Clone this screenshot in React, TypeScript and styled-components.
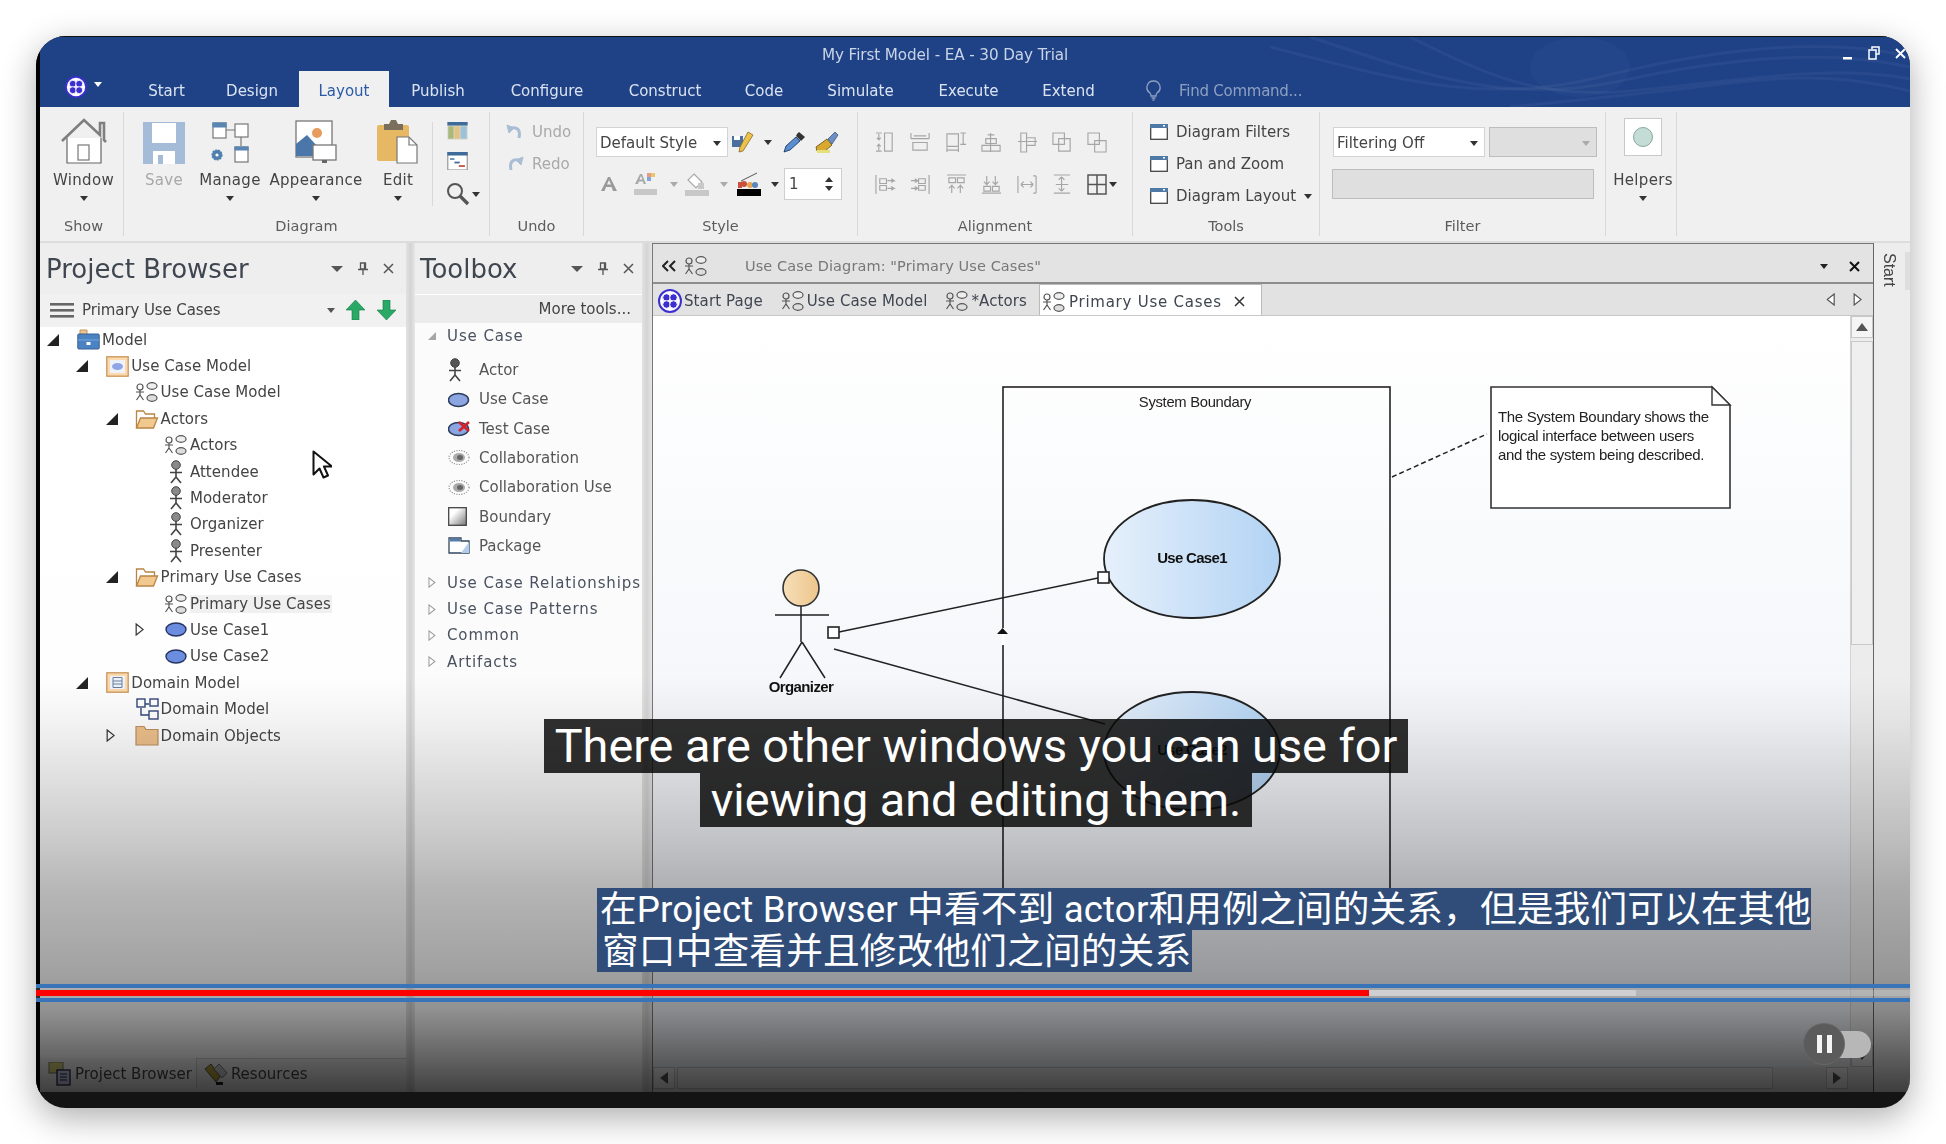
import React from 'react'
import styled, { createGlobalStyle } from 'styled-components'

const GlobalStyle = createGlobalStyle`
  html, body { margin: 0; padding: 0; background: #fff; }
  #root { width: 1946px; height: 1144px; overflow: hidden; }
  * { box-sizing: border-box; }
`

const UI = `'DejaVu Sans', 'Liberation Sans', sans-serif`

const Page = styled.div`
  width: 1946px;
  height: 1144px;
  padding: 36px 36px 36px 36px;
  background: #fff;
`

const Win = styled.div`
  position: relative;
  width: 1874px;
  height: 1072px;
  border-radius: 30px;
  overflow: hidden;
  background: #141414;
  box-shadow: 0 10px 34px rgba(0, 0, 0, 0.32);
`

const Frame = styled.div`
  height: 1056px;
  display: flex;
  flex-direction: column;
  border-left: 4px solid #000;
  border-top: 1px solid #111;
  background: #f0f0f0;
  font-family: ${UI};
  font-size: 15px;
  color: #444;
  filter: blur(0.45px);
`

const FlipSvg = styled.svg<{ $t?: string }>`
  flex: none;
  transform: ${p => p.$t ?? 'none'};
`

/* title bar */
const TitleBar = styled.div`
  position: relative;
  height: 70px;
  flex: none;
  display: flex;
  flex-direction: column;
  background: #1f4287;
`

const TitleWaves = styled.svg`
  position: absolute;
  right: 0;
  top: 0;
`

const TitleRow = styled.div`
  position: relative;
  height: 34px;
  display: flex;
  align-items: center;
  padding: 2px 0 0 782px;
  color: #c9d4e6;
  font-size: 15.2px;
  letter-spacing: -0.1px;
`

const WinControls = styled.div`
  margin-left: auto;
  display: flex;
  align-items: center;
  gap: 15px;
  padding: 0 4px 4px 0;
  color: #fff;
`

const TabRow = styled.div`
  position: relative;
  height: 36px;
  display: flex;
  align-items: stretch;
`

const LogoCell = styled.div`
  width: 88px;
  padding: 5px 0 0 25px;
  display: flex;
  gap: 7px;
  align-items: flex-start;
`

const RibbonTab = styled.div<{ $active?: boolean; $w: number }>`
  width: ${p => p.$w}px;
  padding-top: ${p => (p.$active ? '4px' : '3px')};
  display: flex;
  align-items: center;
  justify-content: center;
  font-size: 15px;
  color: ${p => (p.$active ? '#2a5aa8' : '#dbe3f0')};
  background: ${p => (p.$active ? '#f0f0f0' : 'transparent')};
`

const FindCommand = styled.div`
  display: flex;
  align-items: center;
  gap: 18px;
  margin-left: 30px;
  padding-top: 3px;
  color: #8ea0c0;
  font-size: 15px;
  letter-spacing: -0.25px;
`

/* ribbon */
const Ribbon = styled.div`
  height: 136px;
  flex: none;
  display: flex;
  background: #f0f0f0;
  border-bottom: 2px solid #dcdcdc;
  padding: 5px 0 5px;
`

const Group = styled.div<{ $w: number }>`
  width: ${p => p.$w}px;
  flex: none;
  display: flex;
  flex-direction: column;
  border-right: 1px solid #d9d9d9;
`

const GroupBody = styled.div<{ $pl?: number; $pt?: number; $row?: boolean }>`
  flex: 1;
  display: flex;
  flex-direction: ${p => (p.$row ? 'row' : 'column')};
  padding-left: ${p => p.$pl ?? 0}px;
  padding-top: ${p => p.$pt ?? 0}px;
`

const GroupLabel = styled.div<{ $pl?: number }>`
  height: 20px;
  line-height: 20px;
  padding-left: ${p => p.$pl ?? 0}px;
  text-align: center;
  font-size: 14.5px;
  color: #5c5c5c;
`

const BigButton = styled.div<{ $w: number; $pl?: number; $off?: boolean }>`
  width: ${p => p.$w}px;
  padding-left: ${p => p.$pl ?? 0}px;
  padding-top: 6px;
  display: flex;
  flex-direction: column;
  align-items: center;
  white-space: nowrap;
  color: ${p => (p.$off ? '#a8a8a8' : '#444')};
`

const BigIcon = styled.div`
  height: 46px;
  display: flex;
  align-items: flex-end;
`

const BigLabel = styled.div`
  margin-top: 6px;
  height: 20px;
  line-height: 20px;
  font-size: 15px;
  letter-spacing: 0.3px;
`

const Caret = styled.span<{ $c?: string; $mt?: number; $big?: boolean }>`
  display: inline-block;
  flex: none;
  width: 0;
  height: 0;
  margin-top: ${p => p.$mt ?? 0}px;
  border-left: ${p => (p.$big ? 6 : 4)}px solid transparent;
  border-right: ${p => (p.$big ? 6 : 4)}px solid transparent;
  border-top: ${p => (p.$big ? 6 : 5)}px solid ${p => p.$c ?? '#333'};
`

const SmallStack = styled.div`
  margin-top: 10px;
  height: 84px;
  padding-left: 13px;
  border-left: 1px solid #d9d9d9;
  display: flex;
  flex-direction: column;
  gap: 12px;
`

const MagnifyRow = styled.div`
  display: flex;
  align-items: center;
  gap: 2px;
`

const LinkRow = styled.div<{ $off?: boolean }>`
  height: 32px;
  display: flex;
  align-items: center;
  gap: 8px;
  white-space: nowrap;
  color: ${p => (p.$off ? '#a9a9a9' : '#444')};
`

const TwoRow = styled.div`
  height: 42px;
  display: flex;
  align-items: center;
`

const Cell = styled.span<{ $w: number }>`
  width: ${p => p.$w}px;
  flex: none;
  display: flex;
  justify-content: center;
  align-items: center;
`

const SelectBox = styled.div<{ $w: number; $off?: boolean }>`
  width: ${p => p.$w}px;
  height: 30px;
  flex: none;
  display: flex;
  align-items: center;
  justify-content: space-between;
  padding: 2px 6px 0 3px;
  background: ${p => (p.$off ? '#dfdfdf' : '#fff')};
  border: 1px solid ${p => (p.$off ? '#bdbdbd' : '#d3d3d3')};
  font-size: 15px;
  color: #444;
`

const SpinBox = styled.div`
  width: 58px;
  height: 32px;
  display: flex;
  align-items: center;
  justify-content: space-between;
  padding: 0 8px 0 4px;
  background: #fff;
  border: 1px solid #cfcfcf;
  font-size: 15px;
`

const SpinCarets = styled.div`
  display: flex;
  flex-direction: column;
  gap: 4px;
`

const UpCaret = styled(Caret)`
  transform: rotate(180deg);
`

const AlignGrid = styled.div`
  display: grid;
  grid-template-columns: repeat(7, 35.4px);
  grid-auto-rows: 42px;
  align-items: center;
  justify-items: start;
`

const FilterInput = styled.div`
  width: 262px;
  height: 30px;
  margin-left: -1px;
  background: #dfdfdf;
  border: 1px solid #bdbdbd;
`

const HelperBox = styled.div`
  width: 38px;
  height: 38px;
  margin-bottom: 8px;
  display: flex;
  align-items: center;
  justify-content: center;
  background: #fff;
  border: 1px solid #c9c9c9;
`

/* panes */
const Panes = styled.div`
  flex: 1;
  min-height: 0;
  display: flex;
`

const LeftPane = styled.div`
  width: 366px;
  flex: none;
  display: flex;
  flex-direction: column;
`

const PaneHead = styled.div<{ $pl: number; $pr: number }>`
  height: 51px;
  flex: none;
  display: flex;
  align-items: center;
  padding: 0 ${p => p.$pr}px 0 ${p => p.$pl}px;
  background: #eeeeee;
`

const PaneTitle = styled.div`
  flex: 1;
  font-size: 26px;
  color: #3f4650;
  white-space: nowrap;
`

const PaneTools = styled.div`
  display: flex;
  align-items: center;
  gap: 15px;
`

const BrowserBar = styled.div`
  height: 32.5px;
  flex: none;
  display: flex;
  align-items: center;
  padding: 0 9px 0 10px;
  background: #f1f1f1;
`

const BarText = styled.div`
  flex: 1;
  margin-left: 8px;
  letter-spacing: -0.1px;
`

const TreeBox = styled.div`
  flex: 1;
  min-height: 0;
  background: linear-gradient(#fff, #fdfdfd);
`

const TreeRow = styled.div<{ $depth: number }>`
  height: 26.4px;
  display: flex;
  align-items: center;
  white-space: nowrap;
  letter-spacing: 0.05px;
  padding-left: ${p => 7 + p.$depth * 29.3}px;
`

const TreeCaret = styled.span`
  width: 28px;
  flex: none;
  display: flex;
  align-items: center;
`

const TreeIcon = styled.span<{ $w?: number }>`
  width: ${p => p.$w ?? 27}px;
  flex: none;
  display: flex;
  justify-content: center;
`

const TreeText = styled.span<{ $sel?: boolean }>`
  background: ${p => (p.$sel ? '#f0f0f0' : 'transparent')};
  padding-right: 1px;
`

const DockTabs = styled.div`
  height: 34px;
  flex: none;
  display: flex;
  padding: 0 0 3px 1px;
  background: #eeeeee;
  border-top: 1px solid #d0d0d0;
`

const DockTab = styled.div<{ $active?: boolean }>`
  display: flex;
  align-items: center;
  gap: 3px;
  padding: 0 4px 0 7px;
  background: ${p => (p.$active ? '#f4f4f4' : 'transparent')};
  border-right: ${p => (p.$active ? '1px solid #ccc' : 'none')};
  margin-top: ${p => (p.$active ? '-1px' : '0')};
  font-size: 15px;
  color: #444;
`

const Splitter = styled.div<{ $w: number }>`
  width: ${p => p.$w}px;
  flex: none;
  background: linear-gradient(90deg, #e2e2e2, #d4d4d4 50%, #e6e6e6);
`

const ToolboxPane = styled.div`
  width: 227px;
  flex: none;
  display: flex;
  flex-direction: column;
  overflow: hidden;
  background: #fbfbfb;
`

const ToolboxBar = styled.div`
  height: 29px;
  flex: none;
  display: flex;
  align-items: center;
  justify-content: flex-end;
  padding-right: 11px;
  background: #ececec;
  border-top: 1px solid #fff;
`

const ToolSection = styled.div`
  height: 26.4px;
  display: flex;
  align-items: center;
  padding-left: 13px;
  white-space: nowrap;
  letter-spacing: 0.9px;
  color: #4a5260;
`

const SectionCaret = styled.span`
  width: 19px;
  flex: none;
  display: flex;
  align-items: center;
`

const ToolItems = styled.div`
  padding: 6px 0 9px 33px;
`

const ToolItem = styled.div`
  height: 29.3px;
  display: flex;
  align-items: center;
  white-space: nowrap;
  color: #555;
`

const ToolIcon = styled.span`
  width: 31px;
  flex: none;
  display: flex;
`

const MainPane = styled.div`
  flex: 1;
  min-width: 0;
  display: flex;
  flex-direction: column;
  border-left: 1px solid #777;
  border-top: 1px solid #777;
  border-right: 1px solid #666;
`

const DocHead = styled.div`
  height: 40px;
  flex: none;
  display: flex;
  align-items: center;
  padding: 6px 0 0 9px;
  background: #e3e3e3;
  border-bottom: 2px solid #8d8d8d;
  color: #777;
  font-size: 14.5px;
`

const DocTitle = styled.div`
  flex: 1;
  margin-left: 29px;
  letter-spacing: 0.1px;
`

const DocTabs = styled.div`
  height: 32px;
  flex: none;
  display: flex;
  align-items: stretch;
  padding-left: 5px;
  background: #e2e2e2;
  border-bottom: 1px solid #c8c8c8;
`

const DocTab = styled.div<{ $active?: boolean }>`
  display: flex;
  align-items: center;
  gap: ${p => (p.$active ? '3px' : '2px')};
  margin-right: ${p => (p.$active ? '0' : '18px')};
  padding: ${p => (p.$active ? '3px 6px 0 2px' : '3px 0 0')};
  margin-left: ${p => (p.$active ? '-6px' : '0')};
  background: ${p => (p.$active ? '#fff' : 'transparent')};
  border: ${p => (p.$active ? '1px solid #bbb' : 'none')};
  border-bottom: none;
  white-space: nowrap;
  color: #3f4650;
  letter-spacing: ${p => (p.$active ? '0.75px' : '0.1px')};
`

const DocNav = styled.div`
  margin-left: auto;
  display: flex;
  align-items: center;
  gap: 17px;
  padding-right: 11px;
`

const CanvasRow = styled.div`
  flex: 1;
  min-height: 0;
  display: flex;
`

const Canvas = styled.div`
  flex: 1;
  min-width: 0;
  background: linear-gradient(#fff 0%, #f5f7fa 50%, #eef0f5 100%);
`

const DiagramSvg = styled.svg`
  display: block;
  font-family: 'Liberation Sans', sans-serif;
`

const VScroll = styled.div`
  width: 23px;
  flex: none;
  display: flex;
  flex-direction: column;
  background: #ececec;
  border-left: 1px solid #d4d4d4;
`

const ScrollBtn = styled.div`
  width: 22px;
  height: 22px;
  flex: none;
  display: flex;
  align-items: center;
  justify-content: center;
  background: #f5f5f5;
  border: 1px solid #c8c8c8;
`

const VThumb = styled.div`
  height: 304px;
  margin-top: 3px;
  background: #efefef;
  border: 1px solid #c8c8c8;
`

const VFill = styled.div`
  flex: 1;
`

const HScroll = styled.div`
  height: 25px;
  flex: none;
  display: flex;
  padding-bottom: 3px;
  background: #e8e8e8;
`

const HThumb = styled.div`
  width: 1096px;
  margin-left: 2px;
  background: #f0f0f0;
  border: 1px solid #c8c8c8;
`

const HGap = styled.div`
  width: 25px;
`

const SideStrip = styled.div`
  width: 36px;
  flex: none;
  position: relative;
  background: #ededed;
  padding: 10px 0 0 6px;
  font-size: 14.5px;
  color: #444;
`

const SideLabel = styled.div`
  writing-mode: vertical-rl;
  height: 36px;
  line-height: 18px;
  font-family: 'Liberation Sans', sans-serif;
  font-size: 16px;
`

const SideThumb = styled.div`
  position: absolute;
  top: 9px;
  right: 0;
  width: 5px;
  height: 38px;
  background: #dedede;
`

const Strip = styled.div`
  height: 16px;
`

/* player overlays */
const Shade = styled.div`
  position: absolute;
  left: 0;
  right: 0;
  top: 640px;
  height: 416px;
  pointer-events: none;
  background: linear-gradient(
    rgba(0, 0, 0, 0) 0%,
    rgba(0, 0, 0, 0.04) 10%,
    rgba(0, 0, 0, 0.2) 39%,
    rgba(0, 0, 0, 0.28) 51%,
    rgba(0, 0, 0, 0.36) 71%,
    rgba(0, 0, 0, 0.42) 80%,
    rgba(0, 0, 0, 0.58) 90%,
    rgba(0, 0, 0, 0.74) 100%
  );
`

const CaptionEn = styled.div`
  position: absolute;
  left: 6px;
  right: 0;
  top: 683px;
  display: flex;
  flex-direction: column;
  align-items: center;
`

const CaptionEnLine = styled.div`
  height: 54px;
  padding: 0 11px;
  line-height: 54px;
  background: rgba(8, 8, 8, 0.84);
  color: #fff;
  font-family: 'Roboto', 'Liberation Sans', sans-serif;
  font-size: 46.8px;
  white-space: nowrap;
`

const CaptionZh = styled.div`
  position: absolute;
  left: 561px;
  top: 852px;
  display: flex;
  flex-direction: column;
`

const CaptionZhLine = styled.div<{ $w: number; $pl: number }>`
  width: ${p => p.$w}px;
  height: 42px;
  padding-left: ${p => p.$pl}px;
  line-height: 44px;
  background: #2f4d78;
  color: #fff;
  font-family: 'Roboto', 'Noto Sans CJK SC', sans-serif;
  font-size: 36.7px;
  letter-spacing: 0.14px;
  white-space: nowrap;
  overflow: hidden;
`

const Progress = styled.div`
  position: absolute;
  left: 0;
  right: 0;
  top: 948px;
  height: 18px;
  padding: 2px 0;
  border-top: 4px solid #3a74b8;
  border-bottom: 4px solid #3a74b8;
  background: rgba(255, 255, 255, 0.18);
`

const Track = styled.div`
  position: relative;
  height: 6px;
  background: rgba(255, 255, 255, 0.18);
`

const Buffered = styled.div`
  position: absolute;
  left: 0;
  top: 0;
  bottom: 0;
  width: 1600px;
  background: #cfcfd2;
`

const Played = styled.div`
  position: absolute;
  left: 0;
  top: 0;
  bottom: 0;
  width: 1333px;
  background: #ff0000;
`

const Toggle = styled.div`
  position: absolute;
  left: 1768px;
  top: 988px;
  width: 67px;
  height: 40px;
`

const TogglePill = styled.div`
  position: absolute;
  right: 0;
  top: 7px;
  width: 50px;
  height: 27px;
  border-radius: 14px;
  background: #b7b7b7;
`

const ToggleKnob = styled.div`
  position: absolute;
  left: 0;
  top: 0;
  width: 40px;
  height: 40px;
  border-radius: 50%;
  display: flex;
  gap: 5px;
  align-items: center;
  justify-content: center;
  background: #5b5b5b;
  box-shadow: 0 0 0 1px #666;
`

const PauseBar = styled.span`
  width: 5px;
  height: 18px;
  background: #f4f4f4;
`

const CursorMark = styled.div`
  position: absolute;
  left: 276px;
  top: 414px;
  line-height: 0;
`

/* drawings */
const EaLogo = ({ size }: { size: number }) => (
  <svg width={size} height={size} viewBox="0 0 24 24">
    <circle cx="12" cy="12" r="11" fill="#fff" stroke="#3c2fd0" strokeWidth="2" />
    <g fill="#3c2fd0" stroke="#fff" strokeWidth="1">
      <circle cx="8.5" cy="8.5" r="3.8" />
      <circle cx="15.5" cy="8.5" r="3.8" />
      <circle cx="8.5" cy="15.5" r="3.8" />
      <circle cx="15.5" cy="15.5" r="3.8" />
    </g>
  </svg>
)

const Person = ({ c = '#444' }: { c?: string }) => (
  <svg width="14" height="24" viewBox="0 0 14 24">
    <circle cx="7" cy="5" r="4.3" fill={c === '#444' ? '#8a8a8a' : c} stroke="#444" />
    <path d="M7 9v8M1 12.5h12M7 17l-5 6M7 17l5 6" stroke="#444" strokeWidth="1.6" fill="none" />
  </svg>
)

const UseCaseDiagramIcon = () => (
  <svg width="24" height="24" viewBox="0 0 24 24" fill="none" stroke="#555" strokeWidth="1.2">
    <circle cx="5" cy="7" r="3" />
    <path d="M5 10v5M1 12h8M5 15l-3.5 5M5 15l3.5 5" />
    <ellipse cx="17" cy="6" rx="5" ry="3.3" fill="#eee" />
    <ellipse cx="17" cy="18" rx="5" ry="3.3" fill="#ddd" />
  </svg>
)

const UseCaseOval = () => (
  <svg width="22" height="15" viewBox="0 0 22 15">
    <ellipse cx="11" cy="7.5" rx="10" ry="6.5" fill="#6a8de0" stroke="#26345e" strokeWidth="1.4" />
  </svg>
)

const FolderOpen = () => (
  <svg width="24" height="22" viewBox="0 0 24 22">
    <path d="M1.5 20V3h7l2 3h9v4" fill="#fff" stroke="#b98545" strokeWidth="1.3" />
    <path d="M1.5 20l4-10h17l-4 10z" fill="#f1c88e" stroke="#b98545" strokeWidth="1.3" />
  </svg>
)

const FolderClosed = () => (
  <svg width="24" height="21" viewBox="0 0 24 21">
    <path d="M1 20V1.5h8l2 3h12V20z" fill="#eec08c" stroke="#bb8f5c" strokeWidth="1.2" />
  </svg>
)

const ModelBox = () => (
  <svg width="23" height="23" viewBox="0 0 23 23">
    <path d="M3 6V2h7v4" fill="#f0c48e" stroke="#c09460" />
    <rect x="0.8" y="6" width="21.4" height="15" rx="1" fill="#4a83c4" stroke="#36628f" />
    <rect x="9.5" y="14" width="4" height="3" fill="#fff" />
    <path d="M1 12h21" stroke="#7aa6d8" />
  </svg>
)

const PackageBox = ({ kind }: { kind: 'uc' | 'dm' }) => (
  <svg width="23" height="21" viewBox="0 0 23 21">
    <rect x="0.8" y="0.8" width="21.4" height="19.4" fill="#fbd9ae" stroke="#c99458" strokeWidth="1.3" />
    <rect x="4" y="4" width="15" height="13" fill="#eef2fa" />
    {kind === 'uc' ? (
      <ellipse cx="11.5" cy="10.5" rx="5.5" ry="3.5" fill="#8ea6e6" />
    ) : (
      <path d="M7 5.5h9v10H7zM7 9h9M7 12h9" fill="none" stroke="#6a7f9e" />
    )}
  </svg>
)

const DomainIcon = () => (
  <svg width="23" height="22" viewBox="0 0 23 22" fill="#fff" stroke="#33467a" strokeWidth="1.4">
    <path d="M7 6h6M5 10v7h8" fill="none" />
    <rect x="1" y="1" width="8" height="8" />
    <rect x="14" y="1" width="8" height="7" />
    <rect x="13" y="13" width="9" height="8" />
  </svg>
)

const TriDown = () => (
  <svg width="12" height="12" viewBox="0 0 12 12">
    <path d="M12 0v12H0z" fill="#222" />
  </svg>
)

const TriRight = ({ c = '#333', s = 13, left }: { c?: string; s?: number; left?: boolean }) => (
  <FlipSvg $t={left ? 'scaleX(-1)' : undefined} width={s * 0.72} height={s} viewBox="0 0 9 13">
    <path d="M1 1l7 5.5L1 12z" fill="#fff" stroke={c} strokeWidth="1.2" />
  </FlipSvg>
)

const TriSmallDown = () => (
  <svg width="8" height="8" viewBox="0 0 8 8">
    <path d="M8 0v8H0z" fill="#a6a6a6" />
  </svg>
)

const PinIcon = () => (
  <svg width="10" height="13" viewBox="0 0 10 13" fill="none" stroke="#555" strokeWidth="1.3">
    <path d="M2.5 1h5v6h-5zM0 7.5h10M5 8v5M6.5 1v6" />
  </svg>
)

const CloseIcon = ({ c = '#555', w = 1.5 }: { c?: string; w?: number }) => (
  <svg width="11" height="11" viewBox="0 0 11 11" stroke={c} strokeWidth={w}>
    <path d="M1 1l9 9M10 1l-9 9" />
  </svg>
)

const HomeIcon = () => (
  <svg width="46" height="46" viewBox="0 0 46 46">
    <path d="M6 20v25h34V20" fill="#fff" stroke="#666" strokeWidth="1.2" />
    <path d="M1 23L23 2l16 15V5h4v17l2 2" fill="none" stroke="#7f7f7f" strokeWidth="2.6" />
    <rect x="17" y="27" width="11" height="15" fill="#fff" stroke="#777" strokeWidth="1.2" />
  </svg>
)

const SaveIcon = () => (
  <svg width="42" height="42" viewBox="0 0 42 42">
    <path d="M0 0h42v42H0z" fill="#a4bcd8" />
    <rect x="9" y="1" width="24" height="20" fill="#fff" />
    <rect x="10" y="29" width="22" height="13" fill="#fff" />
    <rect x="15" y="33" width="5" height="9" fill="#a4bcd8" />
  </svg>
)

const ManageIcon = () => (
  <svg width="41" height="42" viewBox="0 0 41 42" fill="#fff" stroke="#777" strokeWidth="1.2">
    <rect x="3" y="1" width="13" height="15" />
    <path d="M3 1h13v4H3z" fill="#5b86b4" stroke="#5b86b4" />
    <rect x="25" y="2" width="13" height="13" />
    <path d="M16 8h9M31 15v9" fill="none" />
    <rect x="25" y="25" width="13" height="15" />
    <path d="M25 25h13v3H25z" fill="#5b86b4" stroke="#5b86b4" />
    <circle cx="7" cy="33" r="5" fill="#4f7fae" stroke="#4f7fae" strokeDasharray="2 1" />
    <circle cx="7" cy="33" r="1.6" fill="#fff" stroke="none" />
  </svg>
)

const AppearanceIcon = () => (
  <svg width="42" height="44" viewBox="0 0 42 44">
    <rect x="1" y="1" width="36" height="36" fill="#fff" stroke="#777" strokeWidth="1.3" />
    <circle cx="22" cy="13" r="5" fill="#e89b5e" />
    <path d="M1 34V24l11-9 11 12 3 9H1z" fill="#4a76aa" />
    <rect x="18" y="25" width="23" height="15" fill="#fff" stroke="#777" strokeWidth="1.3" />
    <path d="M27 40h5v3h-5z" fill="#666" />
  </svg>
)

const EditIcon = () => (
  <svg width="42" height="45" viewBox="0 0 42 45">
    <rect x="0" y="6" width="32" height="36" rx="2" fill="#e7b864" />
    <path d="M7 5h5l2-4h5l2 4h5v6H7z" fill="#7a6f5c" />
    <path d="M20 18h12l8 8v18H20z" fill="#fff" stroke="#777" strokeWidth="1.2" />
    <path d="M32 18v8h8" fill="none" stroke="#777" strokeWidth="1.2" />
  </svg>
)

const ColumnsIcon = () => (
  <svg width="23" height="20" viewBox="0 0 23 20">
    <rect width="23" height="20" fill="#d9d6c8" />
    <rect width="23" height="4" fill="#3e6b99" />
    <rect x="1" y="5" width="6" height="14" fill="#a9b97a" />
    <rect x="8" y="5" width="6" height="14" fill="#e2c284" />
    <rect x="15" y="5" width="7" height="14" fill="#9cc2d8" />
  </svg>
)

const GanttIcon = () => (
  <svg width="23" height="21" viewBox="0 0 23 21">
    <rect x="0.5" y="0.5" width="22" height="20" fill="#fff" stroke="#777" />
    <rect width="23" height="4" fill="#3e6b99" />
    <rect x="3" y="7" width="5" height="2" fill="#5c86ad" />
    <rect x="8" y="11" width="6" height="2" fill="#3e6b99" />
    <rect x="13" y="15" width="7" height="2" fill="#c0503c" />
  </svg>
)

const MagnifyIcon = () => (
  <svg width="24" height="24" viewBox="0 0 24 24" fill="none" stroke="#555">
    <circle cx="9" cy="9" r="7" strokeWidth="2" />
    <path d="M14 14l8 8" strokeWidth="3.4" />
  </svg>
)

const UndoIcon = ({ flip }: { flip?: boolean }) => (
  <FlipSvg $t={flip ? 'scaleX(-1)' : undefined} width="18" height="16" viewBox="0 0 18 16" fill="none" stroke="#a9bdd4" strokeWidth="3">
    <path d="M4 5c6-3 11 0 9 9" />
    <path d="M1 1l2 8 5-5z" fill="#a9bdd4" strokeWidth="1" />
  </FlipSvg>
)

const PenIcon = () => (
  <svg width="24" height="22" viewBox="0 0 24 22">
    <rect x="1" y="5" width="11" height="11" fill="#4a6f9e" />
    <rect x="3" y="5" width="6" height="4" fill="#fff" />
    <path d="M17 1l5 3-10 16-4 1 1-5z" fill="#ecc24a" stroke="#8a6b20" strokeWidth=".8" />
  </svg>
)

const DropperIcon = () => (
  <svg width="24" height="22" viewBox="0 0 24 22">
    <path d="M2 21l2-6L14 6l4 4-10 9z" fill="#5b8ed0" stroke="#1d3c66" strokeWidth=".9" />
    <path d="M15 3l2-2 6 5-3 3-1 1-5-5z" fill="#333" />
  </svg>
)

const BrushIcon = () => (
  <svg width="24" height="22" viewBox="0 0 24 22">
    <path d="M1 16l11-8 5 6-7 6H2z" fill="#d9a92f" stroke="#5f4a12" strokeWidth=".8" />
    <path d="M13 8l7-7 3 3-6 9z" fill="#6d8fc4" stroke="#3a5580" strokeWidth=".8" />
    <rect x="2" y="19" width="13" height="3" fill="#e6e07a" />
  </svg>
)

const FontA = () => (
  <svg width="18" height="16" viewBox="0 0 18 16">
    <path d="M1 15L8 1h2l7 14h-4l-1.5-4H6L4.5 15zM7 8.5h4L9 4z" fill="#9a9a9a" />
  </svg>
)

const FontColorA = () => (
  <svg width="23" height="22" viewBox="0 0 23 22">
    <path d="M1 11l5-10h2l4 10H9.500L9 8.500H5L4 11zM5.500 6.500h3L7 3z" fill="#a9a9a9" />
    <rect x="13" y="0" width="4" height="4" fill="#e79a8a" />
    <rect x="17" y="0" width="4" height="4" fill="#e9c56c" />
    <rect x="13" y="4" width="4" height="4" fill="#7ba7de" />
    <rect x="0" y="16" width="23" height="6" fill="#c8c8c8" />
  </svg>
)

const FillIcon = () => (
  <svg width="24" height="23" viewBox="0 0 24 23">
    <path d="M9 1l8 8-6 6-8-8z" fill="#fff" stroke="#aaa" strokeWidth="1.2" />
    <rect x="13" y="10" width="6" height="6" fill="#c8c8c8" />
    <rect x="0" y="17" width="24" height="6" fill="#c8c8c8" />
  </svg>
)

const LineColorIcon = () => (
  <svg width="24" height="24" viewBox="0 0 24 24">
    <path d="M4 9L20 1" stroke="#555" strokeWidth="1" />
    <circle cx="7" cy="12" r="3" fill="#c9503a" />
    <circle cx="13" cy="13" r="3" fill="#e8a34c" />
    <circle cx="18" cy="13" r="3" fill="#5a86c0" />
    <rect x="1" y="10" width="4" height="6" fill="#c9503a" />
    <rect x="0" y="17" width="24" height="7" fill="#000" />
  </svg>
)

const WindowIcon = () => (
  <svg width="18" height="16" viewBox="0 0 18 16">
    <rect x="0.7" y="0.7" width="16.6" height="14.6" fill="#fff" stroke="#444" strokeWidth="1.3" />
    <rect x="0" y="0" width="18" height="4" fill="#4f7aa8" />
    <rect x="13" y="1" width="2" height="1.5" fill="#fff" />
  </svg>
)

const alignIcons: React.ReactNode[] = [
  <path key="a" d="M1 1h6M1 20h6M4 2v6l-2-2m2 2l2-2M4 19v-6l-2 2m2-2l2 2M10 1h8v19h-8z" />,
  <path key="b" d="M1 7h19M1 1v6M20 1v6M4 4h13M3 11h15v8H3z" />,
  <path key="c" d="M1 2h12v13H1zM15 1h6M18 1v12M15 13h6M1 19h12M1 16v5M13 16v5" />,
  <path key="d" d="M5 7h11v5H5zM1 14h19v6H1zM10 1v20M7 3h7" />,
  <path key="e" d="M4 1h6v20H4zM10 6h9v8h-9zM1 10h20" />,
  <path key="f" d="M1 1h12v12H1zM7 7h12v13H7z" />,
  <path key="g" d="M1 1h12v12H1zM8 9h12v12H8z" />,
  <path key="h" d="M1 1v20M5 5h7v5H5zM5 12h7v5H5zM13 7h7l-3-2m3 2l-3 2M13 15h7l-3-2m3 2l-3 2" />,
  <path key="i" d="M20 1v20M9 5h7v5H9zM9 12h7v5H9zM1 7h7l-3-2m3 2l-3 2M1 15h7l-3-2m3 2l-3 2" />,
  <path key="j" d="M1 1h20M3 4h7v5H3zM12 4h7v5h-7zM6 20v-8l-3 3m3-3l3 3M15 20v-8l-3 3m3-3l3 3" />,
  <path key="k" d="M1 20h20M3 13h7v5H3zM12 13h7v5h-7zM6 2v9l-3-3m3 3l3-3M15 2v9l-3-3m3 3l3-3" />,
  <path key="l" d="M1 2v18M20 2v18M20 2h-3M20 20h-3M4 11h13M4 11l3-3M4 11l3 3M17 11l-3-3M17 11l-3 3" />,
  <path key="m" d="M2 1h17M2 20h17M10 3v15M10 3L7 6M10 3l3 3M10 18l-3-3M10 18l3-3M4 11h13" />,
]

const AlignIcon = ({ i }: { i: number }) => (
  <svg width="21" height="21" viewBox="0 0 22 22" fill="none" stroke="#a5a5a5" strokeWidth="1.2">
    {alignIcons[i]}
  </svg>
)

const GridIcon = () => (
  <svg width="20" height="21" viewBox="0 0 20 21" fill="none" stroke="#555" strokeWidth="1.5">
    <path d="M1 1h18v19H1zM10 1v19M1 10.5h18" />
  </svg>
)

const BulbIcon = () => (
  <svg width="15" height="21" viewBox="0 0 15 21" fill="none" stroke="#8ea0c0" strokeWidth="1.3">
    <path d="M7.5 1a6.5 6.5 0 0 0-3.500 12c.8.7 1 1.600 1 3h5c0-1.400.2-2.300 1-3a6.500 6.500 0 0 0-3.500-12zM5.500 18h4M6.500 20h2" />
  </svg>
)

const Hamburger = () => (
  <svg width="24" height="15" viewBox="0 0 24 15" fill="#666">
    <rect width="24" height="2.6" />
    <rect y="6" width="24" height="2.6" />
    <rect y="12" width="24" height="2.6" />
  </svg>
)

const Arrow = ({ down }: { down?: boolean }) => (
  <FlipSvg $t={down ? 'scaleY(-1)' : undefined} width="19" height="20" viewBox="0 0 19 20">
    <path d="M9.5 0L19 10h-6v10H6V10H0z" fill="#2aa866" stroke="#137a44" strokeWidth=".6" />
  </FlipSvg>
)

const OvalTool = ({ x }: { x?: boolean }) => (
  <svg width="23" height="17" viewBox="0 0 23 17">
    <ellipse cx="10.5" cy="9" rx="10" ry="6.5" fill="#8ba6e0" stroke="#2d3d5e" strokeWidth="1.5" />
    {x && <path d="M11 2l10 9M21 2l-10 9" stroke="#d3202a" strokeWidth="2.6" />}
  </svg>
)

const CollabTool = () => (
  <svg width="23" height="17" viewBox="0 0 23 17">
    <ellipse cx="11" cy="8.5" rx="10" ry="7" fill="none" stroke="#888" strokeWidth="1.2" strokeDasharray="1 1.5" />
    <ellipse cx="11" cy="8.5" rx="6" ry="4.5" fill="#aaa" />
    <ellipse cx="12" cy="8.5" rx="3" ry="2.5" fill="#666" />
  </svg>
)

const BoundaryTool = () => (
  <svg width="19" height="19" viewBox="0 0 19 19">
    <defs>
      <linearGradient id="bnd" x1="0" y1="0" x2="1" y2="1">
        <stop offset="0.3" stopColor="#fff" />
        <stop offset="1" stopColor="#777" />
      </linearGradient>
    </defs>
    <rect x="0.7" y="0.7" width="17.6" height="17.6" fill="url(#bnd)" stroke="#444" strokeWidth="1.3" />
  </svg>
)

const PackageTool = () => (
  <svg width="22" height="17" viewBox="0 0 22 17">
    <path d="M1 1h12v3h8v12H1z" fill="#fff" stroke="#33475f" strokeWidth="1.3" />
    <path d="M2 1.5h10v3H2z" fill="#557ba8" />
    <path d="M21 5l-8 11h8z" fill="#b2cdea" />
  </svg>
)

const ResourceIcon = () => (
  <svg width="24" height="22" viewBox="0 0 24 22">
    <path d="M1 6l11 13 4-5L7 1z" fill="#b4a03a" stroke="#554" />
    <path d="M10 6l5-5 8 9-5 5z" fill="#c8c8c8" stroke="#777" />
    <rect x="12" y="19" width="7" height="3" fill="#222" />
  </svg>
)

const BrowserTabIcon = () => (
  <svg width="24" height="24" viewBox="0 0 24 24">
    <rect x="1" y="0" width="14" height="11" fill="#d8cf7a" stroke="#776" />
    <rect x="9" y="8" width="13" height="15" fill="#c9cde8" stroke="#224" strokeWidth="1.3" />
    <path d="M12 12h7M12 15h7M12 18h7" stroke="#224" />
  </svg>
)

const Pointer = () => (
  <svg width="20" height="30" viewBox="0 0 20 30">
    <path d="M1.5 1.5v23l6-6 4 9 4.5-2-4-9h8z" fill="#fff" stroke="#111" strokeWidth="2" strokeLinejoin="round" />
  </svg>
)

const ScrollArrow = ({ dir, c = '#555' }: { dir: 'up' | 'down' | 'left' | 'right'; c?: string }) => {
  const rot = { up: 0, right: 90, down: 180, left: 270 }[dir]
  return (
    <FlipSvg $t={`rotate(${rot}deg)`} width="14" height="10" viewBox="0 0 14 10">
      <path d="M7 1l6 8H1z" fill={c} />
    </FlipSvg>
  )
}

const Diagram = () => (
  <DiagramSvg width="1195" height="751" viewBox="653 316 1195 751">
    <defs>
      <linearGradient id="uc" x1="0" y1="0" x2="1" y2="0">
        <stop offset="0" stopColor="#e6f0fb" />
        <stop offset="1" stopColor="#b2d3f4" />
      </linearGradient>
      <linearGradient id="head" x1="0" y1="0" x2="1" y2="0">
        <stop offset="0" stopColor="#f6dfb8" />
        <stop offset="1" stopColor="#eec58c" />
      </linearGradient>
    </defs>
    <rect x="1003" y="387" width="387" height="540" fill="none" stroke="#222" strokeWidth="1.6" />
    <text x="1195" y="407" textAnchor="middle" fontSize="14.8" letterSpacing="-0.3" fill="#222">
      System Boundary
    </text>
    <path d="M1003 628v17" stroke="#fff" strokeWidth="3" />
    <path d="M997 634l5.5-6 5.5 6z" fill="#111" />
    <path d="M839 632L1098 578" stroke="#222" strokeWidth="1.6" />
    <path d="M834 649L1105 724" stroke="#222" strokeWidth="1.6" />
    <ellipse cx="1192" cy="559" rx="88" ry="59" fill="url(#uc)" stroke="#222" strokeWidth="1.8" />
    <text x="1192" y="563" textAnchor="middle" fontSize="15" fontWeight="700" letterSpacing="-0.7" fill="#111">
      Use Case1
    </text>
    <ellipse cx="1192" cy="751" rx="88" ry="59" fill="url(#uc)" stroke="#222" strokeWidth="1.8" />
    <text x="1192" y="755" textAnchor="middle" fontSize="15" fontWeight="700" letterSpacing="-0.7" fill="#111">
      Use Case2
    </text>
    <rect x="828" y="627" width="11" height="11" fill="#fff" stroke="#222" strokeWidth="1.6" />
    <rect x="1098" y="572" width="11" height="11" fill="#fff" stroke="#222" strokeWidth="1.6" />
    <circle cx="801" cy="588" r="18" fill="url(#head)" stroke="#333" strokeWidth="1.6" />
    <path d="M801 606v36M775 615h54M802 642l-22 36M802 642l23 36" stroke="#222" strokeWidth="1.5" fill="none" />
    <text x="801" y="692" textAnchor="middle" fontSize="15" fontWeight="700" letterSpacing="-0.6" fill="#111">
      Organizer
    </text>
    <path d="M1392 477L1487 434" stroke="#222" strokeWidth="1.5" strokeDasharray="5 3" />
    <path d="M1491 387h221l18 18v103h-239z" fill="#fff" stroke="#333" strokeWidth="1.6" />
    <path d="M1712 387v18h18z" fill="#fff" stroke="#333" strokeWidth="1.4" />
    <g fontSize="15" letterSpacing="-0.32" fill="#222">
      <text x="1498" y="422">The System Boundary shows the</text>
      <text x="1498" y="441">logical interface between users</text>
      <text x="1498" y="460">and the system being described.</text>
    </g>
  </DiagramSvg>
)

type TreeItem = {
  depth: number
  caret?: 'open' | 'closed'
  icon: React.ReactNode
  label: string
  sel?: boolean
}

const treeItems: TreeItem[] = [
  { depth: 0, caret: 'open', icon: <ModelBox />, label: 'Model' },
  { depth: 1, caret: 'open', icon: <PackageBox kind="uc" />, label: 'Use Case Model' },
  { depth: 2, icon: <UseCaseDiagramIcon />, label: 'Use Case Model' },
  { depth: 2, caret: 'open', icon: <FolderOpen />, label: 'Actors' },
  { depth: 3, icon: <UseCaseDiagramIcon />, label: 'Actors' },
  { depth: 3, icon: <Person />, label: 'Attendee' },
  { depth: 3, icon: <Person />, label: 'Moderator' },
  { depth: 3, icon: <Person />, label: 'Organizer' },
  { depth: 3, icon: <Person />, label: 'Presenter' },
  { depth: 2, caret: 'open', icon: <FolderOpen />, label: 'Primary Use Cases' },
  { depth: 3, icon: <UseCaseDiagramIcon />, label: 'Primary Use Cases', sel: true },
  { depth: 3, caret: 'closed', icon: <UseCaseOval />, label: 'Use Case1' },
  { depth: 3, icon: <UseCaseOval />, label: 'Use Case2' },
  { depth: 1, caret: 'open', icon: <PackageBox kind="dm" />, label: 'Domain Model' },
  { depth: 2, icon: <DomainIcon />, label: 'Domain Model' },
  { depth: 2, caret: 'closed', icon: <FolderClosed />, label: 'Domain Objects' },
]

const toolItems: [React.ReactNode, string][] = [
  [<Person c="#555" />, 'Actor'],
  [<OvalTool />, 'Use Case'],
  [<OvalTool x />, 'Test Case'],
  [<CollabTool />, 'Collaboration'],
  [<CollabTool />, 'Collaboration Use'],
  [<BoundaryTool />, 'Boundary'],
  [<PackageTool />, 'Package'],
]

const ribbonTabs: [string, number][] = [
  ['Start', 77],
  ['Design', 94],
  ['Layout', 90],
  ['Publish', 98],
  ['Configure', 120],
  ['Construct', 116],
  ['Code', 82],
  ['Simulate', 111],
  ['Execute', 105],
  ['Extend', 95],
]

const App = () => (
  <Page>
    <GlobalStyle />
    <Win>
      <Frame>
        <TitleBar>
          <TitleWaves width="640" height="70" viewBox="0 0 640 70" fill="none" stroke="#fff" strokeOpacity="0.045" strokeWidth="3">
            <path d="M0 10c120 30 210 60 330 30S560 0 640 20" />
            <path d="M40 0c120 40 200 68 310 44S560 12 640 30" />
            <path d="M140 0c80 40 130 62 220 54S560 26 640 42" />
            <path d="M240 70c60-6 140-14 220-24s130-4 180 8" />
            <ellipse cx="310" cy="30" rx="50" ry="30" fill="#fff" fillOpacity="0.02" stroke="none" />
          </TitleWaves>
          <TitleRow>
            My First Model - EA - 30 Day Trial
            <WinControls>
              <svg width="10" height="20" viewBox="0 0 10 20"><rect y="14" width="9" height="2.5" fill="#fff" /></svg>
              <svg width="12" height="14" viewBox="0 0 12 14" fill="none" stroke="#fff" strokeWidth="1.5"><path d="M4 3V1h7v7H8M1 4h7v9H1z" /></svg>
              <CloseIcon c="#fff" w={1.8} />
            </WinControls>
          </TitleRow>
          <TabRow>
            <LogoCell>
              <EaLogo size={22} />
              <Caret $c="#fff" $mt={6} />
            </LogoCell>
            {ribbonTabs.map(([t, w]) => (
              <RibbonTab key={t} $w={w} $active={t === 'Layout'}>
                {t}
              </RibbonTab>
            ))}
            <FindCommand>
              <BulbIcon />
              Find Command...
            </FindCommand>
          </TabRow>
        </TitleBar>

        <Ribbon>
          <Group $w={84}>
            <GroupBody $row>
              <BigButton $w={84} $pl={4}>
                <BigIcon><HomeIcon /></BigIcon>
                <BigLabel>Window</BigLabel>
                <Caret $mt={6} />
              </BigButton>
            </GroupBody>
            <GroupLabel $pl={4}>Show</GroupLabel>
          </Group>
          <Group $w={366}>
            <GroupBody $row $pl={17}>
              <BigButton $w={46} $off>
                <BigIcon><SaveIcon /></BigIcon>
                <BigLabel>Save</BigLabel>
              </BigButton>
              <BigButton $w={86}>
                <BigIcon><ManageIcon /></BigIcon>
                <BigLabel>Manage</BigLabel>
                <Caret $mt={6} />
              </BigButton>
              <BigButton $w={86}>
                <BigIcon><AppearanceIcon /></BigIcon>
                <BigLabel>Appearance</BigLabel>
                <Caret $mt={6} />
              </BigButton>
              <BigButton $w={73} $pl={5}>
                <BigIcon><EditIcon /></BigIcon>
                <BigLabel>Edit</BigLabel>
                <Caret $mt={6} />
              </BigButton>
              <SmallStack>
                <ColumnsIcon />
                <GanttIcon />
                <MagnifyRow>
                  <MagnifyIcon />
                  <Caret />
                </MagnifyRow>
              </SmallStack>
            </GroupBody>
            <GroupLabel>Diagram</GroupLabel>
          </Group>
          <Group $w={94}>
            <GroupBody $pl={16} $pt={4}>
              <LinkRow $off><UndoIcon />Undo</LinkRow>
              <LinkRow $off><UndoIcon flip />Redo</LinkRow>
            </GroupBody>
            <GroupLabel>Undo</GroupLabel>
          </Group>
          <Group $w={274}>
            <GroupBody $pl={12} $pt={9}>
              <TwoRow>
                <SelectBox $w={132}>Default Style<Caret /></SelectBox>
                <Cell $w={29}><PenIcon /></Cell>
                <Cell $w={22}><Caret /></Cell>
                <Cell $w={30}><DropperIcon /></Cell>
                <Cell $w={35}><BrushIcon /></Cell>
              </TwoRow>
              <TwoRow>
                <Cell $w={26}><FontA /></Cell>
                <Cell $w={47}><FontColorA /></Cell>
                <Cell $w={10}><Caret $c="#aaa" /></Cell>
                <Cell $w={36}><FillIcon /></Cell>
                <Cell $w={18}><Caret $c="#aaa" /></Cell>
                <Cell $w={32}><LineColorIcon /></Cell>
                <Cell $w={19}><Caret /></Cell>
                <SpinBox>
                  1
                  <SpinCarets><UpCaret /><Caret /></SpinCarets>
                </SpinBox>
              </TwoRow>
            </GroupBody>
            <GroupLabel>Style</GroupLabel>
          </Group>
          <Group $w={275}>
            <GroupBody $pl={17} $pt={9}>
              <AlignGrid>
                {alignIcons.map((_, i) => (
                  <AlignIcon key={i} i={i} />
                ))}
                <MagnifyRow>
                  <GridIcon />
                  <Caret />
                </MagnifyRow>
              </AlignGrid>
            </GroupBody>
            <GroupLabel>Alignment</GroupLabel>
          </Group>
          <Group $w={187}>
            <GroupBody $pl={17} $pt={4}>
              <LinkRow><WindowIcon />Diagram Filters</LinkRow>
              <LinkRow><WindowIcon />Pan and Zoom</LinkRow>
              <LinkRow><WindowIcon />Diagram Layout<Caret /></LinkRow>
            </GroupBody>
            <GroupLabel>Tools</GroupLabel>
          </Group>
          <Group $w={286}>
            <GroupBody $pl={13} $pt={9}>
              <TwoRow>
                <SelectBox $w={152}>Filtering Off<Caret /></SelectBox>
                <Cell $w={4} />
                <SelectBox $w={108} $off><span /><Caret $c="#aaa" /></SelectBox>
              </TwoRow>
              <TwoRow>
                <FilterInput />
              </TwoRow>
            </GroupBody>
            <GroupLabel>Filter</GroupLabel>
          </Group>
          <Group $w={71}>
            <GroupBody $row>
              <BigButton $w={71} $pl={4}>
                <BigIcon>
                  <HelperBox>
                    <svg width="22" height="22" viewBox="0 0 22 22">
                      <circle cx="11" cy="11" r="9.5" fill="#c3dcd5" stroke="#8aa5a0" />
                    </svg>
                  </HelperBox>
                </BigIcon>
                <BigLabel>Helpers</BigLabel>
                <Caret $mt={6} />
              </BigButton>
            </GroupBody>
            <GroupLabel />
          </Group>
        </Ribbon>

        <Panes>
          <LeftPane>
            <PaneHead $pl={6} $pr={12}>
              <PaneTitle>Project Browser</PaneTitle>
              <PaneTools>
                <Caret $c="#555" $big />
                <PinIcon />
                <CloseIcon />
              </PaneTools>
            </PaneHead>
            <BrowserBar>
              <Hamburger />
              <BarText>Primary Use Cases</BarText>
              <Caret $c="#555" />
              <Cell $w={40}><Arrow /></Cell>
              <Cell $w={22}><Arrow down /></Cell>
            </BrowserBar>
            <TreeBox>
              {treeItems.map(item => (
                <TreeRow key={`${item.depth}-${item.label}-${String(item.sel)}`} $depth={item.depth}>
                  <TreeCaret>
                    {item.caret === 'open' && <TriDown />}
                    {item.caret === 'closed' && <TriRight />}
                  </TreeCaret>
                  <TreeIcon>{item.icon}</TreeIcon>
                  <TreeText $sel={item.sel}>{item.label}</TreeText>
                </TreeRow>
              ))}
            </TreeBox>
            <DockTabs>
              <DockTab $active><BrowserTabIcon />Project Browser</DockTab>
              <DockTab><ResourceIcon />Resources</DockTab>
            </DockTabs>
          </LeftPane>
          <Splitter $w={9} />
          <ToolboxPane>
            <PaneHead $pl={5} $pr={8}>
              <PaneTitle>Toolbox</PaneTitle>
              <PaneTools>
                <Caret $c="#555" $big />
                <PinIcon />
                <CloseIcon />
              </PaneTools>
            </PaneHead>
            <ToolboxBar>More tools...</ToolboxBar>
            <ToolSection>
              <SectionCaret><TriSmallDown /></SectionCaret>
              Use Case
            </ToolSection>
            <ToolItems>
              {toolItems.map(([icon, label]) => (
                <ToolItem key={label}>
                  <ToolIcon>{icon}</ToolIcon>
                  {label}
                </ToolItem>
              ))}
            </ToolItems>
            {['Use Case Relationships', 'Use Case Patterns', 'Common', 'Artifacts'].map(s => (
              <ToolSection key={s}>
                <SectionCaret><TriRight c="#999" s={11} /></SectionCaret>
                {s}
              </ToolSection>
            ))}
          </ToolboxPane>
          <Splitter $w={10} />
          <MainPane>
            <DocHead>
              <svg width="14" height="12" viewBox="0 0 14 12" fill="none" stroke="#222" strokeWidth="2"><path d="M6 1L1 6l5 5M13 1L8 6l5 5" /></svg>
              <Cell $w={40}><UseCaseDiagramIcon /></Cell>
              <DocTitle>Use Case Diagram: "Primary Use Cases"</DocTitle>
              <Cell $w={22}><Caret $c="#222" /></Cell>
              <Cell $w={38}><CloseIcon c="#111" w={2} /></Cell>
            </DocHead>
            <DocTabs>
              <DocTab><EaLogo size={24} />Start Page</DocTab>
              <DocTab><UseCaseDiagramIcon />Use Case Model</DocTab>
              <DocTab><UseCaseDiagramIcon />*Actors</DocTab>
              <DocTab $active>
                <UseCaseDiagramIcon />
                Primary Use Cases
                <Cell $w={30}><CloseIcon c="#333" /></Cell>
              </DocTab>
              <DocNav>
                <TriRight c="#555" s={13} left />
                <TriRight c="#555" s={13} />
              </DocNav>
            </DocTabs>
            <CanvasRow>
              <Canvas><Diagram /></Canvas>
              <VScroll>
                <ScrollBtn><ScrollArrow dir="up" /></ScrollBtn>
                <VThumb />
                <VFill />
                <ScrollBtn><ScrollArrow dir="down" /></ScrollBtn>
              </VScroll>
            </CanvasRow>
            <HScroll>
              <ScrollBtn><ScrollArrow dir="left" /></ScrollBtn>
              <HThumb />
              <VFill />
              <ScrollBtn><ScrollArrow dir="right" /></ScrollBtn>
              <HGap />
            </HScroll>
          </MainPane>
          <SideStrip>
            <SideLabel>Start</SideLabel>
            <SideThumb />
          </SideStrip>
        </Panes>
      </Frame>
      <Strip />

      <Shade />
      <CursorMark><Pointer /></CursorMark>
      <CaptionEn>
        <CaptionEnLine>There are other windows you can use for</CaptionEnLine>
        <CaptionEnLine>viewing and editing them.</CaptionEnLine>
      </CaptionEn>
      <CaptionZh>
        <CaptionZhLine $w={1214} $pl={3}>在Project Browser 中看不到 actor和用例之间的关系，但是我们可以在其他</CaptionZhLine>
        <CaptionZhLine $w={595} $pl={5}>窗口中查看并且修改他们之间的关系</CaptionZhLine>
      </CaptionZh>
      <Progress>
        <Track>
          <Buffered />
          <Played />
        </Track>
      </Progress>
      <Toggle>
        <TogglePill />
        <ToggleKnob><PauseBar /><PauseBar /></ToggleKnob>
      </Toggle>
    </Win>
  </Page>
)

export default App
